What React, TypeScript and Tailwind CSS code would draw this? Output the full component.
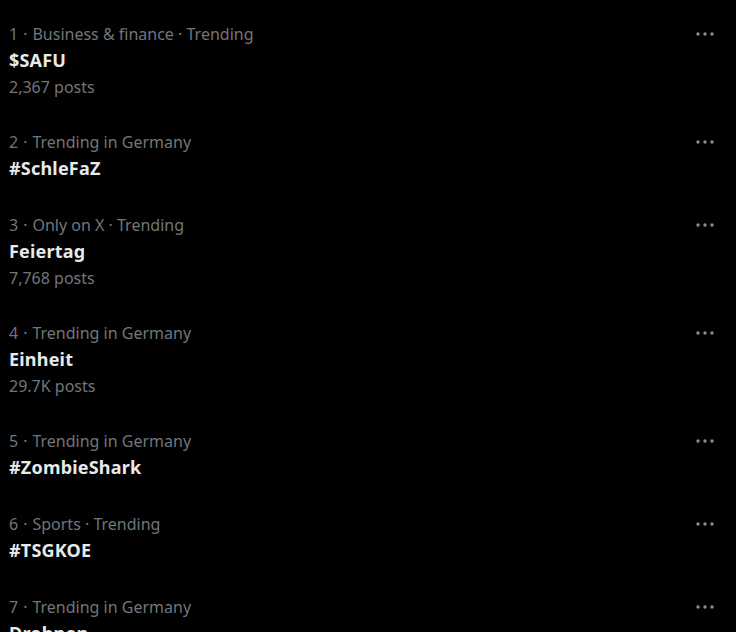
import React from 'react';

type Trend = {
  rank: number;
  context: string;
  title: string;
  posts?: string;
};

const trends: Trend[] = [
  { rank: 1, context: 'Business & finance · Trending', title: '$SAFU', posts: '2,367 posts' },
  { rank: 2, context: 'Trending in Germany', title: '#SchleFaZ' },
  { rank: 3, context: 'Only on X · Trending', title: 'Feiertag', posts: '7,768 posts' },
  { rank: 4, context: 'Trending in Germany', title: 'Einheit', posts: '29.7K posts' },
  { rank: 5, context: 'Trending in Germany', title: '#ZombieShark' },
  { rank: 6, context: 'Sports · Trending', title: '#TSGKOE' },
  { rank: 7, context: 'Trending in Germany', title: 'Drohnen' },
];

const MoreIcon = () => (
  <svg width="20" height="18" viewBox="0 0 20 18" className="text-[#8b8e92]">
    <circle cx="3" cy="9" r="1.7" fill="currentColor" />
    <circle cx="10" cy="9" r="1.7" fill="currentColor" />
    <circle cx="17" cy="9" r="1.7" fill="currentColor" />
  </svg>
);

const TrendRow = ({ trend }: { trend: Trend }) => (
  <div className="flex items-start justify-between pl-[9px] pr-[21px] pt-3 pb-[23px]">
    <div className="flex flex-col">
      <div className="text-[16px] leading-5 text-[#71767b]">
        {trend.rank}<span className="mx-[5px]">·</span>{trend.context}
      </div>
      <div className="mt-1 text-[18px] font-bold leading-6 tracking-[0.2px] text-[#e7e9ea]">{trend.title}</div>
      {trend.posts && (
        <div className="mt-[5px] text-[16px] leading-5 text-[#71767b]">{trend.posts}</div>
      )}
    </div>
    <div className="mt-px">
      <MoreIcon />
    </div>
  </div>
);

const App: React.FC = () => {
  return (
    <div
      className="h-[632px] w-[736px] overflow-hidden bg-black pt-3"
      style={{ fontFamily: '"Noto Sans", "Open Sans", sans-serif' }}
    >
      {trends.map((t) => (
        <TrendRow key={t.rank} trend={t} />
      ))}
    </div>
  );
};

export default App;
